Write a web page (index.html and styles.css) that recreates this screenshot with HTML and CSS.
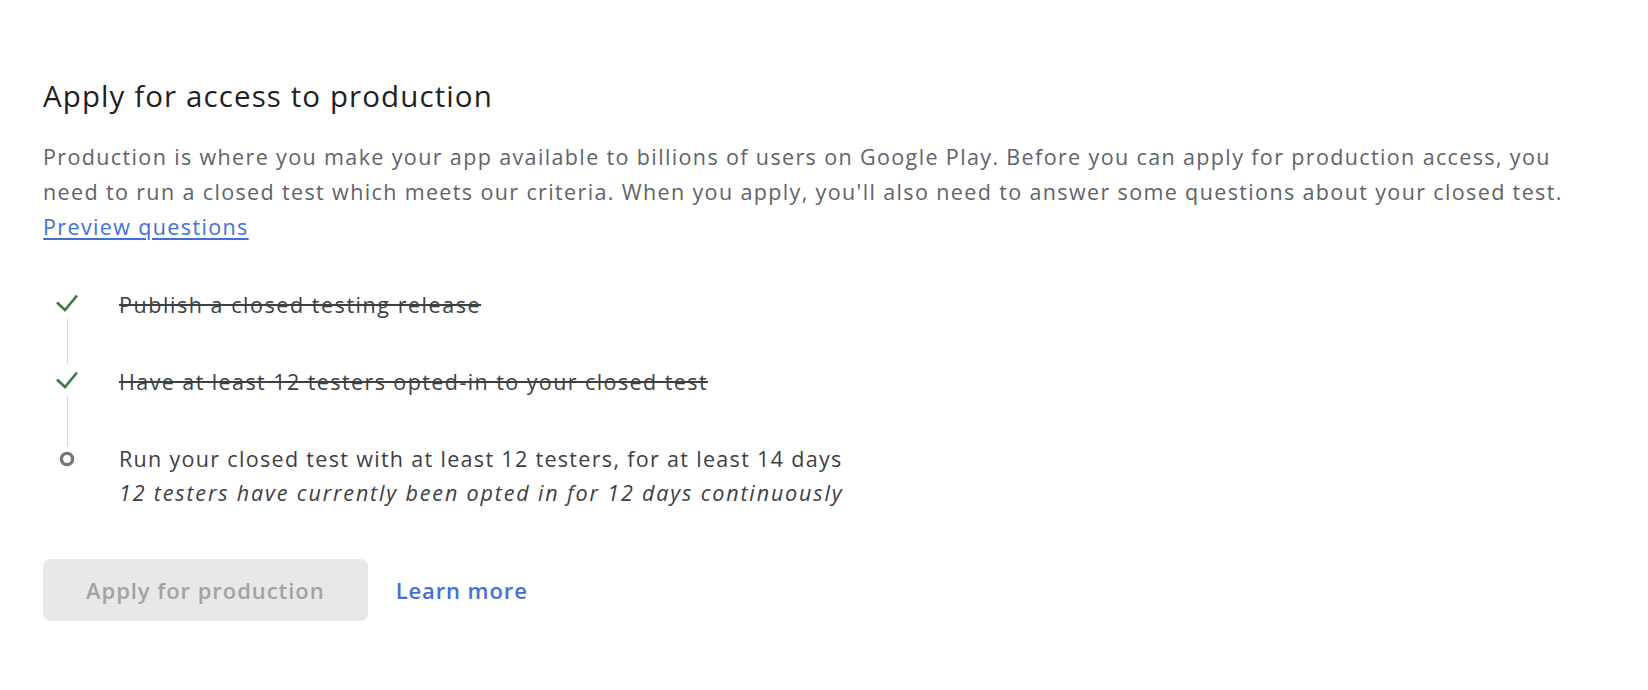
FILE: index.html
```html
<!DOCTYPE html>
<html lang="en">
<head>
<meta charset="utf-8">
<title>Apply for access to production</title>
<link rel="stylesheet" href="styles.css">
</head>
<body>
<main class="page">
  <h1 class="title">Apply for access to production</h1>
  <p class="intro">Production is where you make your app available to billions of users on Google Play. Before you can apply for production access, you need to run a closed test which meets our criteria. When you apply, you'll also need to answer some questions about your closed test. <a href="#" class="link">Preview questions</a></p>

  <ol class="steps">
    <li class="step step-done">
      <div class="rail">
        <span class="icon">
          <svg width="24" height="24" viewBox="0 0 24 24"><polyline points="2,12.5 10,20 22,5.5" fill="none" stroke="#3e7b47" stroke-width="2.7"/></svg>
        </span>
        <span class="connector"></span>
      </div>
      <div class="step-body"><span class="step-title done first">Publish a closed testing release</span></div>
    </li>
    <li class="step step-done">
      <div class="rail">
        <span class="icon">
          <svg width="24" height="24" viewBox="0 0 24 24"><polyline points="2,12.5 10,20 22,5.5" fill="none" stroke="#3e7b47" stroke-width="2.7"/></svg>
        </span>
        <span class="connector connector-long"></span>
      </div>
      <div class="step-body"><span class="step-title done">Have at least 12 testers opted-in to your closed test</span></div>
    </li>
    <li class="step step-current">
      <div class="rail">
        <span class="icon icon-pending">
          <svg width="16" height="16" viewBox="0 0 16 16"><circle cx="8" cy="8" r="5.6" fill="none" stroke="#767676" stroke-width="3.4"/></svg>
        </span>
      </div>
      <div class="step-body">
        <div class="step-title">Run your closed test with at least 12 testers, for at least 14 days</div>
        <div class="step-note">12 testers have currently been opted in for 12 days continuously</div>
      </div>
    </li>
  </ol>

  <div class="actions">
    <button class="btn-disabled" type="button" disabled>Apply for production</button>
    <a href="#" class="text-link">Learn more</a>
  </div>
</main>
</body>
</html>
```

FILE: styles.css
```css
* { box-sizing: border-box; }

html, body {
  margin: 0;
  padding: 0;
  background: #ffffff;
}

.page {
  padding: 78px 40px 40px 43px;
  width: 1640px;
  font-family: "Open Sans", "Noto Sans", Arial, sans-serif;
}

.title {
  margin: 0;
  font-family: "Open Sans", "Noto Sans", Arial, sans-serif;
  font-weight: 400;
  font-size: 29.5px;
  letter-spacing: 1.1px;
  line-height: 36px;
  color: #1f1f1f;
}

.intro {
  margin: 25px 0 0 0;
  font-size: 21.5px;
  letter-spacing: 1.37px;
  line-height: 35px;
  color: #5f6368;
  width: 1548px;
}

.link {
  color: #4170d8;
  text-decoration: underline;
  text-underline-offset: 3px;
}

.steps {
  list-style: none;
  margin: 43px 0 0 0;
  padding: 0;
}

.step {
  display: flex;
  gap: 28px;
}

.rail {
  width: 48px;
  flex: 0 0 48px;
  display: flex;
  flex-direction: column;
  align-items: center;
}

.icon {
  height: 30px;
  display: flex;
  align-items: center;
  justify-content: center;
}

.icon-pending {
  height: 35px;
}

.connector {
  flex: 1;
  width: 1px;
  background: #d6d6d6;
  margin-top: 2px;
}

.connector-long {
  margin-bottom: -5px;
}

.step-body {
  padding-bottom: 42px;
  font-size: 21.5px;
  letter-spacing: 1.32px;
  line-height: 35px;
  color: #3c4043;
}

.step-current .step-body {
  padding-bottom: 0;
}

.step-title.done {
  text-decoration: line-through;
  text-decoration-thickness: 2px;
  letter-spacing: 1.42px;
  color: #3c4043;
}

.step-title.first {
  letter-spacing: 1.55px;
}

.step-note {
  font-style: italic;
  letter-spacing: 1.85px;
  line-height: 34px;
}

.actions {
  margin-top: 49px;
  display: flex;
  align-items: center;
  gap: 28px;
}

.btn-disabled {
  height: 62px;
  padding: 0 43px;
  border: none;
  border-radius: 8px;
  background: #e8e8e8;
  color: #a3a3a3;
  font-family: "Open Sans", "Noto Sans", Arial, sans-serif;
  font-size: 22px;
  font-weight: 600;
  letter-spacing: 0.95px;
  cursor: default;
}

.text-link {
  color: #4170d8;
  font-size: 22px;
  font-weight: 600;
  letter-spacing: 0.9px;
  text-decoration: none;
}
```
